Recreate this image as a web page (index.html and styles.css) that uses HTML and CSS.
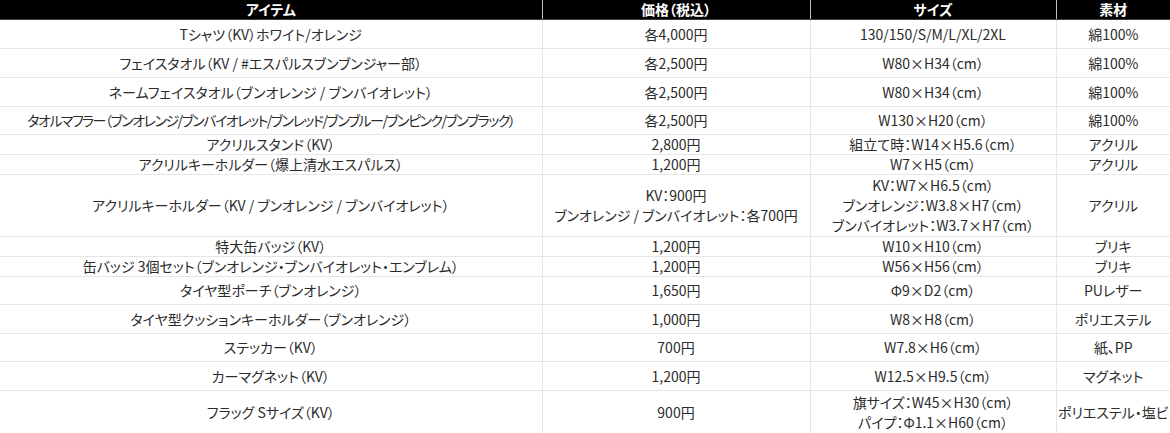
FILE: index.html
```html
<!DOCTYPE html>
<html lang="ja">
<head>
<meta charset="utf-8">
<link rel="stylesheet" href="styles.css">
</head>
<body>
<table class="goods">
<colgroup>
<col class="c-item"><col class="c-price"><col class="c-size"><col class="c-mat">
</colgroup>
<thead>
<tr class="head"><th>アイテム</th><th>価格（税込）</th><th>サイズ</th><th>素材</th></tr>
</thead>
<tbody>
<tr class="tall"><td>Tシャツ（KV）ホワイト/オレンジ</td><td>各4,000円</td><td>130/150/S/M/L/XL/2XL</td><td>綿100%</td></tr>
<tr class="tall"><td>フェイスタオル（KV / #エスパルスブンブンジャー部）</td><td>各2,500円</td><td>W80×H34（cm）</td><td>綿100%</td></tr>
<tr class="tall"><td>ネームフェイスタオル（ブンオレンジ / ブンバイオレット）</td><td>各2,500円</td><td>W80×H34（cm）</td><td>綿100%</td></tr>
<tr class="mid"><td class="tight">タオルマフラー（ブンオレンジ/ブンバイオレット/ブンレッド/ブンブルー/ブンピンク/ブンブラック）</td><td>各2,500円</td><td>W130×H20（cm）</td><td>綿100%</td></tr>
<tr class="short"><td>アクリルスタンド（KV）</td><td>2,800円</td><td>組立て時：W14×H5.6（cm）</td><td>アクリル</td></tr>
<tr class="short"><td>アクリルキーホルダー（爆上清水エスパルス）</td><td>1,200円</td><td>W7×H5（cm）</td><td>アクリル</td></tr>
<tr class="multi"><td>アクリルキーホルダー（KV / ブンオレンジ / ブンバイオレット）</td><td>KV：900円<br>ブンオレンジ / ブンバイオレット：各700円</td><td>KV：W7×H6.5（cm）<br>ブンオレンジ：W3.8×H7（cm）<br>ブンバイオレット：W3.7×H7（cm）</td><td>アクリル</td></tr>
<tr class="short"><td>特大缶バッジ（KV）</td><td>1,200円</td><td>W10×H10（cm）</td><td>ブリキ</td></tr>
<tr class="short"><td>缶バッジ 3個セット（ブンオレンジ・ブンバイオレット・エンブレム）</td><td>1,200円</td><td>W56×H56（cm）</td><td>ブリキ</td></tr>
<tr class="mid"><td>タイヤ型ポーチ（ブンオレンジ）</td><td>1,650円</td><td>Φ9×D2（cm）</td><td>PUレザー</td></tr>
<tr class="tall"><td>タイヤ型クッションキーホルダー（ブンオレンジ）</td><td>1,000円</td><td>W8×H8（cm）</td><td>ポリエステル</td></tr>
<tr class="mid"><td>ステッカー（KV）</td><td>700円</td><td>W7.8×H6（cm）</td><td>紙、PP</td></tr>
<tr class="tall"><td>カーマグネット（KV）</td><td>1,200円</td><td>W12.5×H9.5（cm）</td><td>マグネット</td></tr>
<tr class="two"><td>フラッグ Sサイズ（KV）</td><td>900円</td><td>旗サイズ：W45×H30（cm）<br>パイプ：Φ1.1×H60（cm）</td><td>ポリエステル・塩ビ</td></tr>
</tbody>
</table>
</body>
</html>
```
FILE: styles.css
```css
html, body {
  margin: 0;
  padding: 0;
  background: #fff;
}
body {
  font-family: "Noto Sans CJK JP", "Noto Sans", sans-serif;
  font-size: 14px;
  color: #2b2b2b;
  font-feature-settings: "palt";
}
.goods {
  width: 1170px;
  border-collapse: collapse;
  table-layout: fixed;
}
.c-item { width: 542px; }
.c-price { width: 268px; }
.c-size { width: 246px; }
.c-mat { width: 114px; }
.goods th,
.goods td {
  padding: 0;
  text-align: center;
  vertical-align: middle;
  line-height: 18px;
  border: 1px solid #e6e6e6;
  white-space: nowrap;
  overflow: hidden;
}
.goods tr > :first-child { border-left: none; }
.goods tr > :last-child { border-right: none; }
.goods thead th {
  background: #000;
  color: #fff;
  font-weight: 700;
  font-size: 14px;
  line-height: 17px;
  border-top: none;
  border-color: #3a3a3a #bdbdbd #3a3a3a #bdbdbd;
}
.head { height: 19px; }
.tall { height: 29px; }
.mid { height: 28px; }
.short { height: 20px; }
.multi { height: 62px; }
.multi td, .two td { line-height: 20px; }
.two { height: 44px; }
.goods tbody td { font-size: 14px; }
.goods tbody td.tight { letter-spacing: -1.5px; }
```
